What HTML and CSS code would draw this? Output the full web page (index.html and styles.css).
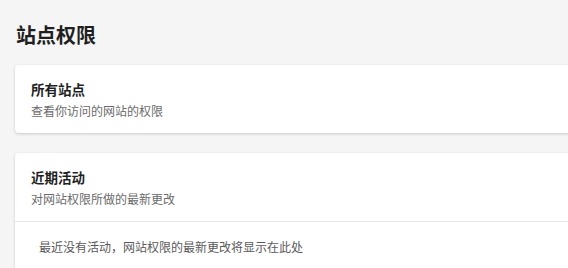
FILE: index.html
```html
<html>
<head>
<meta charset="utf-8">
<link rel="stylesheet" href="styles.css">
</head>
<body>
<div class="page">
	<h1 class="pagetitle">站点权限</h1>

	<div class="card">
		<div class="cardhead">
			<div class="cardtitle">所有站点</div>
			<div class="cardsub">查看你访问的网站的权限</div>
		</div>
	</div>

	<div class="card">
		<div class="cardhead">
			<div class="cardtitle">近期活动</div>
			<div class="cardsub">对网站权限所做的最新更改</div>
		</div>
		<div class="cardbody">
			<div class="emptytext">最近没有活动，网站权限的最新更改将显示在此处</div>
		</div>
	</div>
</div>
</body>
</html>
```

FILE: styles.css
```css
body {
	margin: 0;
	background-color: #f5f5f5;
	font-family: "Noto Sans CJK SC", "Noto Sans", sans-serif;
	color: #1f1f1f;
	overflow: hidden;
}
.page {
	padding: 17px 0 0 15px;
	width: 640px;
}
.pagetitle {
	font-size: 20px;
	font-weight: bold;
	line-height: 36px;
	margin: 0 0 12px 1px;
}
.card {
	background-color: #ffffff;
	border-radius: 4px;
	box-shadow: 0 1px 3px rgba(0, 0, 0, 0.18);
	margin-bottom: 20px;
}
.cardhead {
	padding: 14px 16px 13px 16px;
}
.cardtitle {
	font-size: 13.5px;
	font-weight: bold;
	line-height: 20px;
}
.cardsub {
	font-size: 12px;
	color: #6b6b6b;
	line-height: 18px;
	margin-top: 3px;
}
.cardbody {
	border-top: 1px solid #e6e6e6;
	padding: 16px 24px;
}
.emptytext {
	font-size: 12px;
	color: #5a5a5a;
	line-height: 18px;
}
```
